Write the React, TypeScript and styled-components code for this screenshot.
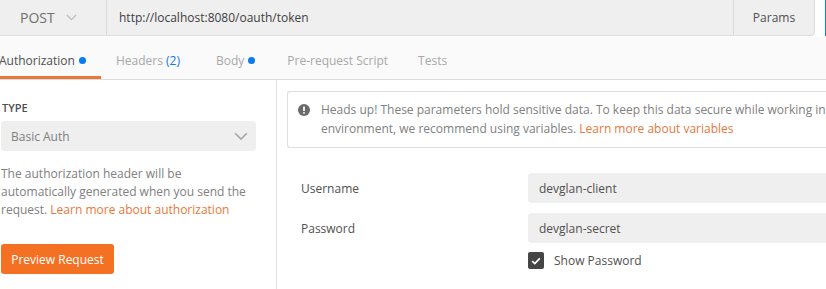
import React from "react";
import styled, { createGlobalStyle } from "styled-components";

const Global = createGlobalStyle`
  html, body { margin: 0; padding: 0; background: #ffffff; overflow: hidden; }
  body { font-family: "Open Sans", "Liberation Sans", sans-serif; color: #505050; }
  * { box-sizing: border-box; }
`;

const Page = styled.div`
  width: 826px;
  height: 289px;
  display: flex;
  flex-direction: column;
  overflow: hidden;
`;

const TopRow = styled.div`
  display: flex;
  height: 37px;
  flex: none;
`;

const UrlGroup = styled.div`
  flex: none;
  display: flex;
  width: 815px;
  height: 36px;
  background: #efefef;
  border: 1px solid #dedede;
  border-top: none;
  border-left: none;
  border-radius: 0 0 4px 0;
`;

const Method = styled.div`
  width: 107px;
  flex: none;
  display: flex;
  align-items: center;
  padding-left: 20px;
  gap: 11px;
  font-size: 14px;
  color: #707070;
  border-right: 1px solid #dcdcdc;
`;

const Url = styled.div`
  flex: 1;
  display: flex;
  align-items: center;
  padding-left: 12px;
  font-size: 12px;
  color: #404040;
`;

const ParamsButton = styled.div`
  width: 81px;
  flex: none;
  display: flex;
  align-items: center;
  justify-content: center;
  border-left: 1px solid #dcdcdc;
  font-size: 12px;
  color: #505050;
`;

const SendEdge = styled.div`
  flex: none;
  margin-left: 10px;
  width: 10px;
  height: 36px;
  background: #097bed;
`;

const TabBar = styled.div`
  display: flex;
  height: 43px;
  flex: none;
  background: #fafafa;
  border-bottom: 1px solid #dcdcdc;
  margin-left: -16px;
`;

const Tab = styled.div<{ $active?: boolean; $extra?: number }>`
  display: flex;
  align-items: center;
  gap: 4px;
  padding: 8px 15px 0 15px;
  margin-right: ${(p) => p.$extra ?? 0}px;
  font-size: 12px;
  color: ${(p) => (p.$active ? "#505050" : "#a8a8a8")};
  border-bottom: 3px solid ${(p) => (p.$active ? "#e9773c" : "transparent")};
`;

const Dot = styled.span`
  width: 7px;
  height: 7px;
  border-radius: 50%;
  background: #097bed;
  display: inline-block;
`;

const Count = styled.span`
  color: #097bed;
`;

const Body = styled.div`
  flex: 1;
  display: flex;
  min-height: 0;
`;

const Sidebar = styled.div`
  width: 277px;
  flex: none;
  border-right: 1px solid #dedede;
  padding: 20px 20px 0 1px;
  display: flex;
  flex-direction: column;
`;

const TypeLabel = styled.div`
  font-size: 11px;
  font-weight: 600;
  color: #505050;
  padding-left: 1px;
  line-height: 15px;
`;

const TypeSelect = styled.div`
  margin-top: 6px;
  height: 30px;
  width: 255px;
  background: #efefef;
  border-radius: 3px;
  display: flex;
  align-items: center;
  justify-content: space-between;
  padding: 0 8px 0 10px;
  font-size: 12px;
  color: #808080;
`;

const Description = styled.p`
  margin: 14px 0 0 0;
  font-size: 12px;
  line-height: 18px;
  color: #808080;
`;

const Link = styled.span`
  color: #e9773c;
`;

const PreviewButton = styled.div`
  margin-top: 25px;
  width: 113px;
  height: 30px;
  border-radius: 3px;
  background: #f47023;
  color: #ffffff;
  font-size: 12px;
  display: flex;
  align-items: center;
  justify-content: center;
`;

const Main = styled.div`
  flex: 1;
  padding: 11px 0 0 10px;
  display: flex;
  flex-direction: column;
  min-width: 0;
`;

const Notice = styled.div`
  border: 1px solid #dedede;
  border-right: none;
  border-radius: 3px 0 0 3px;
  height: 57px;
  padding: 8px 0 0 10px;
  display: flex;
  gap: 11px;
  font-size: 12px;
  line-height: 19px;
  color: #808080;
  white-space: nowrap;
  overflow: hidden;
`;

const NoticeIcon = styled.svg`
  flex: none;
  margin-top: 4px;
`;

const Fields = styled.div`
  margin-top: 25px;
  display: grid;
  grid-template-columns: 227px 1fr;
  row-gap: 10px;
  padding-left: 14px;
`;

const FieldLabel = styled.div`
  display: flex;
  align-items: center;
  font-size: 12px;
  color: #505050;
`;

const Input = styled.div`
  height: 30px;
  background: #efefef;
  border-radius: 3px 0 0 3px;
  display: flex;
  align-items: center;
  padding-left: 11px;
  font-size: 12px;
  color: #505050;
`;

const CheckRow = styled.div`
  grid-column: 2;
  display: flex;
  align-items: center;
  gap: 10px;
  margin-top: -1px;
  font-size: 12px;
  color: #505050;
`;

const CheckBox = styled.span`
  width: 16px;
  height: 17px;
  border-radius: 2px;
  background: #454545;
  display: flex;
  align-items: center;
  justify-content: center;
`;

const Chevron = ({ color = "#b8b8b8", size = 12 }: { color?: string; size?: number }) => (
  <svg width={size} height={size * 0.6} viewBox="0 0 12 7" fill="none">
    <path d="M1 1l5 5 5-5" stroke={color} strokeWidth="1.4" />
  </svg>
);

export default function App() {
  return (
    <Page>
      <Global />
      <TopRow>
        <UrlGroup>
          <Method>
            POST
            <Chevron color="#bdbdbd" size={11} />
          </Method>
          <Url>http://localhost:8080/oauth/token</Url>
          <ParamsButton>Params</ParamsButton>
        </UrlGroup>
        <SendEdge />
      </TopRow>
      <TabBar>
        <Tab $active>
          Authorization <Dot />
        </Tab>
        <Tab $extra={6}>
          <span>
            Headers <Count>(2)</Count>
          </span>
        </Tab>
        <Tab $extra={2}>
          Body <Dot />
        </Tab>
        <Tab>Pre-request Script</Tab>
        <Tab>Tests</Tab>
      </TabBar>
      <Body>
        <Sidebar>
          <TypeLabel>TYPE</TypeLabel>
          <TypeSelect>
            Basic Auth
            <Chevron color="#a8a8a8" size={14} />
          </TypeSelect>
          <Description>
            The authorization header will be automatically generated when you send the request.{" "}
            <Link>Learn more about authorization</Link>
          </Description>
          <PreviewButton>Preview Request</PreviewButton>
        </Sidebar>
        <Main>
          <Notice>
            <NoticeIcon width="12" height="12" viewBox="0 0 12 12">
              <circle cx="6" cy="6" r="6" fill="#6a6a6a" />
              <rect x="5.1" y="2.4" width="1.8" height="4.6" rx="0.6" fill="#fff" />
              <circle cx="6" cy="8.9" r="0.95" fill="#fff" />
            </NoticeIcon>
            <div>
              Heads up! These parameters hold sensitive data. To keep this data secure while working in a collaborative
              <br />
              environment, we recommend using variables. <Link>Learn more about variables</Link>
            </div>
          </Notice>
          <Fields>
            <FieldLabel>Username</FieldLabel>
            <Input>devglan-client</Input>
            <FieldLabel>Password</FieldLabel>
            <Input>devglan-secret</Input>
            <CheckRow>
              <CheckBox>
                <svg width="10" height="8" viewBox="0 0 10 8" fill="none">
                  <path d="M1.2 4.2l2.6 2.4L8.8 1.4" stroke="#fff" strokeWidth="1.7" />
                </svg>
              </CheckBox>
              Show Password
            </CheckRow>
          </Fields>
        </Main>
      </Body>
    </Page>
  );
}
